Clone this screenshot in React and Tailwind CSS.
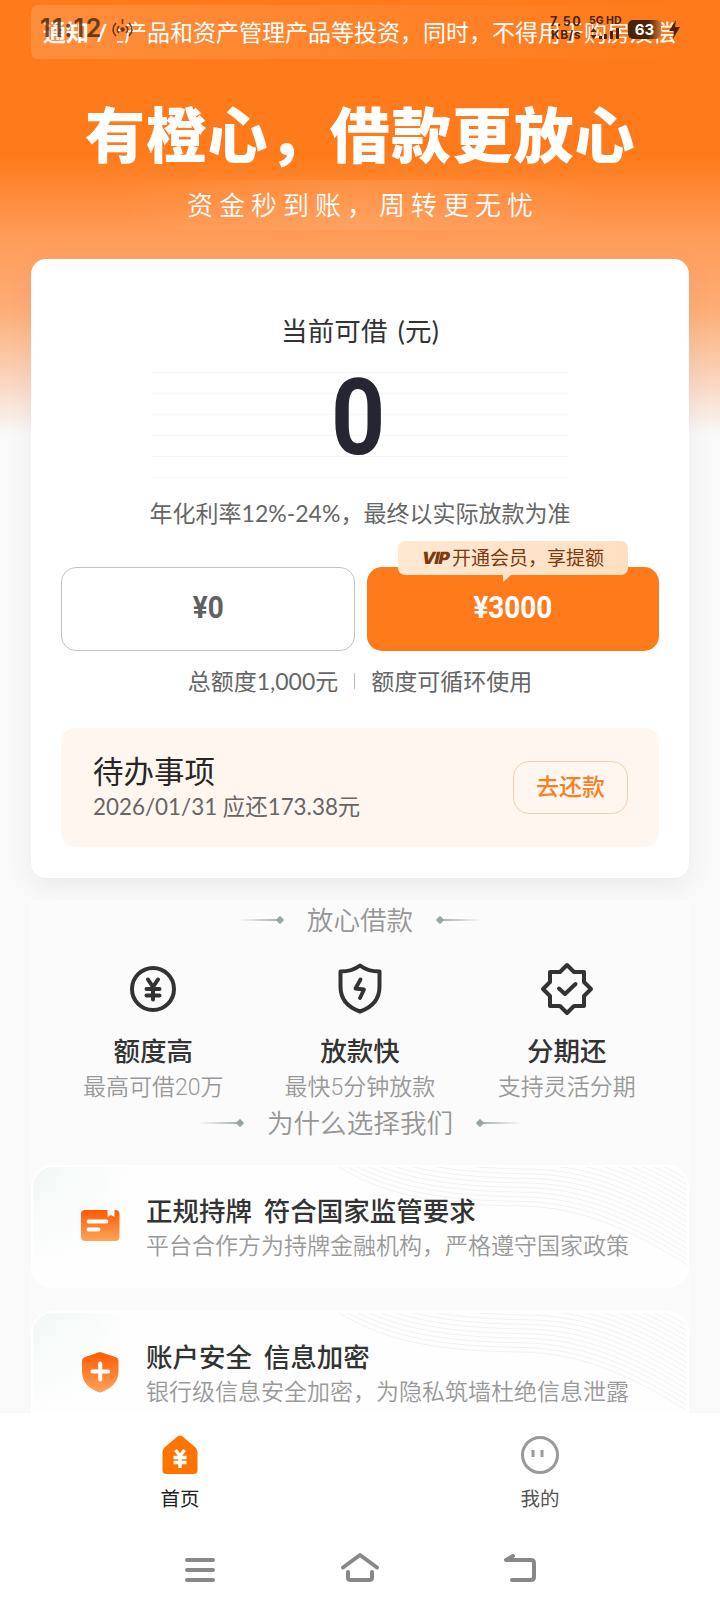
import React from 'react';

const features = [
  { id: 'amount', title: '额度高', desc: '最高可借20万' },
  { id: 'fast', title: '放款快', desc: '最快5分钟放款' },
  { id: 'installment', title: '分期还', desc: '支持灵活分期' },
];

const reasons = [
  { id: 'license', title: '正规持牌 符合国家监管要求', desc: '平台合作方为持牌金融机构，严格遵守国家政策' },
  { id: 'secure', title: '账户安全 信息加密', desc: '银行级信息安全加密，为隐私筑墙杜绝信息泄露' },
];

function FeatureIcon({ id }) {
  return (
    <svg width="60" height="60" viewBox="0 0 60 60" fill="none" stroke="#333" strokeWidth="4" strokeLinecap="round" strokeLinejoin="round">
      {id === 'amount' && (
        <>
          <circle cx="30" cy="30" r="21" />
          <path d="M25 20.500l5 7.500 5-7.500M30 28v12.500M23.500 30h13M23.500 36.500h13" />
        </>
      )}
      {id === 'fast' && (
        <>
          <path d="M30 6.500C25.500 10 19 12.500 10.500 12.500V27.500C10.500 41 18.500 48.500 30 52.500C41.500 48.500 49.500 41 49.500 27.500V12.500C41 12.500 34.500 10 30 6.500Z" />
          <path d="M30.500 20.500L25.500 29.500L34 30.500L30 39" strokeWidth="3.800" />
        </>
      )}
      {id === 'installment' && (
        <>
          <path d="M30 6L37 13H47V23L54 30L47 37V47H37L30 54L23 47H13V37L6 30L13 23V13H23Z" />
          <path d="M22 29.500L28 35L38.500 25" />
        </>
      )}
    </svg>
  );
}

function ReasonIcon({ id }) {
  return (
    <svg width="44" height="44" viewBox="0 0 44 44">
      <defs>
        <linearGradient id={`grad-${id}`} x1="0" y1="0" x2="0" y2="1">
          <stop offset="0" stopColor="#ff5a00" />
          <stop offset="1" stopColor="#ffa45c" />
        </linearGradient>
      </defs>
      {id === 'license' ? (
        <>
          <path d="M7 6h22.500v7l3.500-2 3.500 2V6h1q4 0 4 4v23q0 4-4 4H7q-4 0-4-4V10q0-4 4-4z" fill={`url(#grad-${id})`} />
          <path d="M10.500 17.500h18M10.500 25.500h10" stroke="#fff" strokeWidth="3.800" strokeLinecap="round" />
        </>
      ) : (
        <>
          <path d="M22 2L37.500 7Q40.500 8 40.500 11V22C40.500 32 33 38.500 24 42Q22 42.800 20 42C11 38.500 4 32 4 22V11Q4 8 7 7Z" fill={`url(#grad-${id})`} />
          <path d="M14.500 21.500h15.500M22.200 13.500v16" stroke="#fff" strokeWidth="4" strokeLinecap="round" />
        </>
      )}
    </svg>
  );
}

function SectionTitle({ children }) {
  return (
    <div className="flex h-10 items-center justify-center gap-[24px]">
      <div className="flex items-center">
        <div className="h-[2px] w-[42px] bg-gradient-to-r from-transparent to-[#9fabab]" />
        <div className="-ml-1 size-[6px] rotate-45 rounded-[1px] bg-[#98a5a5]" />
      </div>
      <h2 className="text-[26.600px] font-[350] leading-10 text-[#969696]">{children}</h2>
      <div className="flex items-center">
        <div className="-mr-1 size-[6px] rotate-45 rounded-[1px] bg-[#98a5a5]" />
        <div className="h-[2px] w-[42px] bg-gradient-to-l from-transparent to-[#9fabab]" />
      </div>
    </div>
  );
}

// Fine wavy lines in the upper right of each reason card
function Waves() {
  return (
    <svg className="absolute right-0 top-0" width="356" height="123" viewBox="0 0 356 123" fill="none" stroke="#f1f1f1">
      {Array.from({ length: 24 }, (_, i) => (
        <path key={i} d="M8 0C60 32 120 38 190 39C250 40 300 62 358 99" transform={`translate(${i * 1.2} ${i * -4.6})`} />
      ))}
    </svg>
  );
}

function StatusBar() {
  return (
    <div className="absolute inset-x-0 top-0 z-10 h-[58px] text-[#4b2407]">
      <span className="absolute left-[40px] top-[13px] font-['Inter'] text-[25px] font-semibold leading-[30px] tracking-[1.500px] opacity-80">11:12</span>
      <svg className="absolute left-[111px] top-[18px] opacity-80" width="23" height="24" viewBox="0 0 23 24" fill="none" stroke="currentColor" strokeWidth="1.600">
        <path d="M5 5Q-1 12 5 18M8 8Q4.500 12 8 15M18 5q6 7 0 13M15 8q3.500 4 0 7" />
        <circle cx="11.500" cy="11.500" r="1.500" fill="currentColor" />
        <path d="M11.500 1v5" />
      </svg>
      <div className="absolute left-[549px] top-[15px] w-[34px] text-center font-['Inter'] text-[12.500px] font-bold leading-[13px]">
        <div className="tracking-[1.500px]">7.50</div>
        <div className="text-[12px] tracking-[0.500px]">KB/s</div>
      </div>
      <div className="absolute left-[589px] top-[15px] font-['Inter'] text-[10.500px] font-bold leading-[12px] whitespace-nowrap">5G HD</div>
      <svg className="absolute left-[590px] top-[28px]" width="32" height="12" viewBox="0 0 32 12" fill="currentColor">
        <path d="M3.500 0l3 4h-6zM3.500 11l3-4h-6zM9 8h3v3H9zM14 6h3v5h-3zM20 3h3v8h-3zM26 0h3v11h-3z" />
      </svg>
      <div className="absolute left-[628px] top-[20px] h-[19px] w-[33px] rounded-[5px] bg-gradient-to-r from-[#4b2407] from-60% to-[#c9783a] text-center font-['Inter'] text-[15px] font-bold leading-[19px] text-white">63</div>
      <svg className="absolute left-[669px] top-[20px]" width="12" height="19" viewBox="0 0 12 19" fill="currentColor">
        <path d="M7 0L0 11h5L4 19l7-12H6z" />
      </svg>
    </div>
  );
}

function LoanCard() {
  return (
    <section className="mx-[31px] flex h-[619px] shrink-0 flex-col rounded-[15px] bg-white px-[30px] shadow-[0_8px_22px_rgba(120,120,150,0.1)]">
      <h2 className="mt-[53px] text-center text-[26.500px] leading-[38px] tracking-[0.200px] text-[#333] [word-spacing:3px]">当前可借 (元)</h2>
      <div className="mx-auto mt-[22px] h-[107px] w-[416px] bg-[repeating-linear-gradient(to_bottom,#f6f6f6_0,#f6f6f6_1px,transparent_1px,transparent_21px)] pr-[3px] text-center">
        <span className="inline-block origin-center scale-x-[0.9] font-['Roboto'] text-[105px] font-bold leading-[94px] text-[#262633]">0</span>
      </div>
      <p className="mt-[17px] text-center text-[23px] leading-[34px] text-[#666]">年化利率12%-24%，最终以实际放款为准</p>

      <div className="mt-[37px] flex gap-3">
        <button className="h-[84px] flex-1 rounded-[15px] border border-[#c2c2c2] pb-[1px]">
          <span className="inline-block scale-x-90 font-['Roboto'] text-[31px] font-bold text-[#606060]">¥0</span>
        </button>
        <button className="relative h-[84px] flex-1 rounded-[15px] bg-[#ff7a1a] pb-[1px]">
          <span className="inline-block scale-x-90 font-['Roboto'] text-[31px] font-bold text-white">¥3000</span>
          <span className="absolute -top-[26px] left-[31px] flex h-[34px] w-[230px] items-center justify-center rounded-[7px] bg-gradient-to-r from-[#ffe8d2] to-[#ffdfc0] text-[19px] leading-[34px] text-[#7b3a12]">
            <b className="mr-[3px] inline-block -skew-x-12 font-['Inter'] text-[17px] font-black tracking-[-0.800px]">VIP</b>
            开通会员，享提额
            <svg className="absolute left-[105px] top-[34px]" width="8" height="8" viewBox="0 0 8 8">
              <path d="M0 0h8L0 7z" fill="#ffe3c9" />
            </svg>
          </span>
        </button>
      </div>

      <div className="mt-[13px] flex items-center justify-center gap-[16px] text-[23px] leading-[34px] text-[#666]">
        <span>总额度1,000元</span>
        <span className="h-4 w-px bg-[#bbb]" />
        <span>额度可循环使用</span>
      </div>

      <div className="mt-[30px] flex h-[119px] shrink-0 items-center justify-between rounded-[14px] bg-[#fff6f0] pl-[32px] pr-[31px]">
        <div>
          <h3 className="text-[30.500px] leading-[38px] text-[#262626]">待办事项</h3>
          <p className="text-[22.400px] leading-[34px] text-[#666]">2026/01/31 应还173.38元</p>
        </div>
        <button className="h-[53px] w-[115px] rounded-[16px] border border-[#f5cdb0] pb-[2px] text-[23px] font-medium text-[#f7801f]">去还款</button>
      </div>
    </section>
  );
}

function TabBar() {
  return (
    <nav className="flex h-[107px] shrink-0 bg-white pt-[19px] text-[19.500px]">
      <div className="flex flex-1 flex-col items-center text-[#222]">
        <svg width="46" height="46" viewBox="0 0 46 46">
          <path d="M20.500 4.500Q23 2.500 25.500 4.500L38 15Q40.500 17 40.500 20V38Q40.500 42 36.500 42H9.500Q5.500 42 5.500 38V20Q5.500 17 8 15Z" fill="#ff7300" />
          <path d="M18.500 18l4.500 6 4.500-6M23 24v12M16.500 25.500h13M16.500 30.500h13" stroke="#fff" strokeWidth="3.400" fill="none" />
        </svg>
        <span className="mt-[4px] leading-[34px]">首页</span>
      </div>
      <div className="flex flex-1 flex-col items-center text-[#555]">
        <svg width="46" height="46" viewBox="0 0 46 46" fill="none" stroke="#999" strokeWidth="3">
          <circle cx="23" cy="23" r="17.500" />
          <path d="M16 18v7M25 18v7" />
        </svg>
        <span className="mt-[4px] leading-[34px]">我的</span>
      </div>
    </nav>
  );
}

function SystemNav() {
  return (
    <div className="flex h-[92px] shrink-0 items-start justify-center gap-[120px] bg-white pt-[30px]">
      <svg width="40" height="40" viewBox="0 0 40 40" stroke="#888" strokeWidth="4" strokeLinecap="round">
        <path d="M7 10h26M7 20h26M7 30h26" />
      </svg>
      <svg width="40" height="40" viewBox="0 0 40 40" stroke="#888" strokeWidth="4" strokeLinecap="round" strokeLinejoin="round" fill="none">
        <path d="M3 17.500L20 5l17 12.500M8 22v6q0 2 3 2h18q3 0 3-2v-6" />
      </svg>
      <svg width="40" height="40" viewBox="0 0 40 40" stroke="#888" strokeWidth="4" strokeLinecap="round" strokeLinejoin="round" fill="none">
        <path d="M13 6L6 10H31q3 0 3 3v14q0 3-3 3H12" />
      </svg>
    </div>
  );
}

export default function App() {
  return (
    <div className="relative flex h-[1612px] w-[720px] flex-col overflow-hidden bg-[#f9f9f9] font-['Lato','Noto_Sans_CJK_SC',sans-serif]">
      <StatusBar />
      <main className="flex h-[1413px] shrink-0 flex-col overflow-hidden bg-[linear-gradient(to_bottom,#ff7a1a_0,#ff7a1a_155px,#ff9b58_235px,#fdad75_310px,#fad5be_380px,#f9f9f9_435px)]">
        <div className="mx-[31px] mt-[5px] flex h-[54px] shrink-0 items-center rounded-[7px] bg-gradient-to-r from-white/15 to-transparent pl-[12px] pr-[13px] text-[23px] text-white">
          <b className="w-[74px] shrink-0 whitespace-pre [word-spacing:2px]">通知 /</b>
          <div className="flex flex-1 justify-end overflow-hidden whitespace-nowrap">
            <span>让产品和资产管理产品等投资，同时，不得用于购房及偿</span>
          </div>
        </div>

        <h1 className="mt-[31px] shrink-0 whitespace-nowrap pl-[85px] text-[60px] font-black leading-[90px] tracking-[1.200px] text-white">有橙心，借款更放心</h1>
        <div className="mx-auto flex h-[50px] w-[480px] shrink-0 items-center justify-center bg-gradient-to-r from-transparent via-white/10 to-transparent pl-[6px] text-[26px] font-[350] tracking-[6px] text-white">
          资金秒到账，周转更无忧
        </div>
        <div className="h-[29px] shrink-0" />

        <LoanCard />

        <div className="mx-[31px] mt-[22px] shrink-0 bg-[#fbfbfb]">
          <SectionTitle>放心借款</SectionTitle>
          <div className="mt-[19px] grid grid-cols-3 px-[19px]">
            {features.map((item) => (
              <div key={item.id} className="flex flex-col items-center">
                <FeatureIcon id={item.id} />
                <h3 className="mt-[13px] text-[26.500px] font-medium leading-[38px] text-[#333]">{item.title}</h3>
                <p className="mt-px font-['Roboto','Noto_Sans_CJK_SC',sans-serif] text-[23px] font-[350] leading-[34px] text-[#999]">{item.desc}</p>
              </div>
            ))}
          </div>
          <div className="-mt-[2px]">
            <SectionTitle>为什么选择我们</SectionTitle>
          </div>
          <div className="mt-[22px] flex flex-col gap-[23px]">
            {reasons.map((item) => (
              <div key={item.id} className="relative flex h-[123px] items-start overflow-hidden rounded-[22px] border-2 border-white bg-[radial-gradient(circle_at_top_left,#f2f8f6_0,#fefefe_100px)] pl-[45px]">
                <Waves />
                <div className="relative mt-[37px]">
                  <ReasonIcon id={item.id} />
                </div>
                <div className="relative ml-[24px] mt-[25px] whitespace-nowrap">
                  <h3 className="text-[26.500px] font-medium leading-[38px] text-[#333] [word-spacing:5px]">{item.title}</h3>
                  <p className="mt-[-2px] text-[23px] font-[350] leading-[34px] text-[#999]">{item.desc}</p>
                </div>
              </div>
            ))}
          </div>
        </div>
      </main>
      <TabBar />
      <SystemNav />
    </div>
  );
}
